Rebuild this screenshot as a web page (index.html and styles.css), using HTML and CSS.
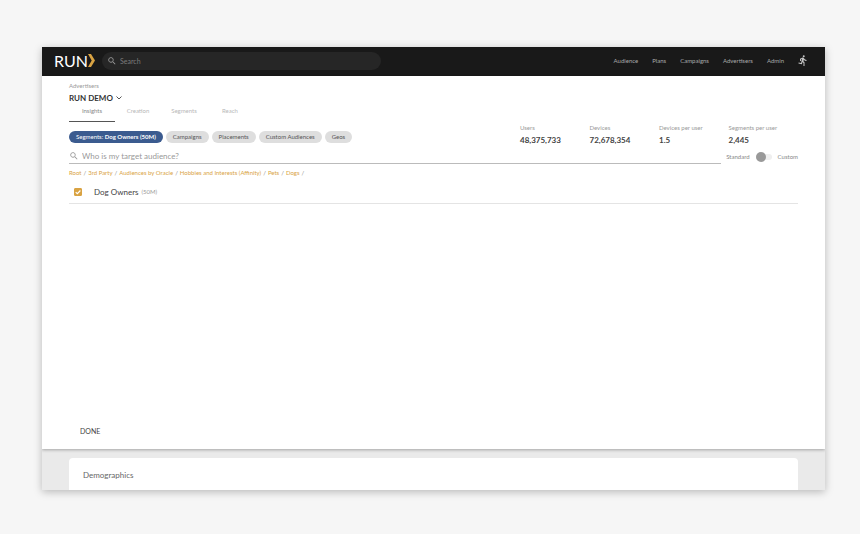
FILE: index.html
```html
<!DOCTYPE html>
<html lang="en">
<head>
    <meta charset="UTF-8">
    <meta name="viewport" content="width=device-width, initial-scale=1.0">
    <title>RUN - Insights</title>
    <link rel="stylesheet" href="styles.css">
</head>
<body>
    <div class="window">
        <header class="topbar">
            <a class="logo" href="#">RUN<svg class="logo-mark" viewBox="0 0 7 13"><path d="M0 0h3l4 6.500-4 6.500H0l3.700-6.500z"/></svg></a>
            <label class="search">
                <svg class="icon" viewBox="0 0 24 24"><path d="M15.500 14h-.79l-.28-.27A6.500 6.500 0 1 0 13.730 14.430l.27.28v.79l5 5L20.490 19zM9.500 14a4.500 4.500 0 1 1 0-9 4.500 4.500 0 0 1 0 9z"/></svg>
                <input type="search" placeholder="Search" aria-label="Search">
            </label>
            <nav class="nav">
                <a href="#">Audience</a>
                <a href="#">Plans</a>
                <a href="#">Campaigns</a>
                <a href="#">Advertisers</a>
                <a href="#">Admin</a>
                <a class="runner" href="#" aria-label="Account"><svg viewBox="3 1 18 22"><path d="M13.490 5.480a2 2 0 1 0 0-4 2 2 0 0 0 0 4zm-3.600 13.900l1-4.400 2.100 2v6h2v-7.500l-2.100-2 .6-3a7.300 7.300 0 0 0 5.500 2.500v-2c-1.900 0-3.500-1-4.300-2.400l-1-1.600c-.4-.6-1-1-1.700-1-.3 0-.5.1-.8.1l-5.200 2.200v4.700h2v-3.400l1.800-.7-1.600 8.100-4.900-1-.4 2z"/></svg></a>
            </nav>
        </header>

        <main class="panel">
            <div class="summary">
                <div class="account">
                    <span class="account-label">Advertisers</span>
                    <button class="account-name" type="button">RUN DEMO
                        <svg viewBox="0 0 6 4"><path d="M.5.5L3 3 5.500.5"/></svg>
                    </button>
                    <nav class="tabs">
                        <a class="tab active" href="#">Insights</a>
                        <a class="tab" href="#">Creation</a>
                        <a class="tab" href="#">Segments</a>
                        <a class="tab" href="#">Reach</a>
                    </nav>
                    <div class="chips">
                        <button class="chip selected" type="button">Segments: <b>Dog Owners (50M)</b></button>
                        <button class="chip" type="button">Campaigns</button>
                        <button class="chip" type="button">Placements</button>
                        <button class="chip" type="button">Custom Audiences</button>
                        <button class="chip" type="button">Geos</button>
                    </div>
                </div>
                <dl class="stats">
                    <div><dt>Users</dt><dd>48,375,733</dd></div>
                    <div><dt>Devices</dt><dd>72,678,354</dd></div>
                    <div><dt>Devices per user</dt><dd>1.5</dd></div>
                    <div><dt>Segments per user</dt><dd>2,445</dd></div>
                </dl>
            </div>

            <div class="query">
                <label class="query-box">
                    <svg class="icon" viewBox="0 0 24 24"><path d="M15.500 14h-.79l-.28-.27A6.500 6.500 0 1 0 13.730 14.430l.27.28v.79l5 5L20.490 19zM9.500 14a4.500 4.500 0 1 1 0-9 4.500 4.500 0 0 1 0 9z"/></svg>
                    <input type="text" placeholder="Who is my target audience?" aria-label="Target audience">
                </label>
                <label class="mode">
                    <span>Standard</span>
                    <input class="switch" type="checkbox">
                    <span>Custom</span>
                </label>
            </div>

            <nav class="crumbs">
                <a href="#">Root</a><i>/</i>
                <a href="#">3rd Party</a><i>/</i>
                <a href="#">Audiences by Oracle</a><i>/</i>
                <a href="#">Hobbies and Interests (Affinity)</a><i>/</i>
                <a href="#">Pets</a><i>/</i>
                <a href="#">Dogs</a><i>/</i>
            </nav>

            <label class="result">
                <span class="tick">
                    <input type="checkbox" checked>
                    <svg viewBox="0 0 7 7"><path d="M1.500 3.600L2.900 5 5.600 2.200"/></svg>
                </span>
                <span>Dog Owners</span>
                <small>(50M)</small>
            </label>

            <button class="done" type="button">DONE</button>
        </main>

        <section class="below">
            <div class="card">
                <h2>Demographics</h2>
            </div>
        </section>
    </div>
</body>
</html>
```

FILE: styles.css
```css
* {
    box-sizing: border-box;
}

body {
    margin: 0;
    height: 100vh;
    padding: 47px 35px 44px 42px;
    background: #f6f6f6;
    color: #444;
    font-family: Lato, "Open Sans", sans-serif;
    font-size: 6px;
    line-height: 8px;
}

a {
    color: inherit;
    text-decoration: none;
}

button,
input {
    margin: 0;
    padding: 0;
    border: 0;
    background: none;
    color: inherit;
    font: inherit;
}

input {
    outline: none;
}

.window {
    display: flex;
    flex-direction: column;
    height: 100%;
    overflow: hidden;
    background: #eaeaea;
    box-shadow: 0 2px 8px rgba(0, 0, 0, 0.25);
}

/* Top bar */
.topbar {
    display: flex;
    flex: none;
    align-items: center;
    height: 29px;
    padding: 0 17px 2px 12px;
    background: #191919;
}

.logo {
    display: flex;
    align-items: center;
    width: 48px;
    color: #fff;
    font-size: 16px;
    line-height: 20px;
}

.logo-mark {
    width: 7px;
    height: 13px;
    fill: #d9a343;
}

.search {
    display: flex;
    align-items: center;
    gap: 3px;
    width: 37%;
    height: 18px;
    padding: 0 5px;
    border-radius: 9px;
    background: #262626;
    color: #8c8c8c;
}

.icon {
    flex: none;
    width: 10px;
    height: 10px;
    fill: #999;
}

.search input {
    flex: 1;
    min-width: 0;
    font-size: 7px;
}

.search input::placeholder {
    color: #7c7c7c;
}

.nav {
    display: flex;
    align-items: center;
    gap: 14px;
    margin-left: auto;
    color: #aaa;
    font-size: 6px;
}

.runner svg {
    display: block;
    width: 10px;
    height: 11px;
    fill: #c4c4c4;
}

/* Main panel */
.panel {
    display: flex;
    flex: none;
    flex-direction: column;
    align-items: stretch;
    height: calc(100% - 70px);
    padding: 6px 27px 13px;
    background: #fff;
    box-shadow: 0 1px 3px rgba(0, 0, 0, 0.3);
}

.summary {
    display: flex;
    justify-content: space-between;
    align-items: flex-end;
}

.account-label {
    display: block;
    color: #999;
}

.account-name {
    display: flex;
    align-items: center;
    gap: 3px;
    margin-top: 3px;
    color: #333;
    font-size: 8px;
    font-weight: bold;
    line-height: 10px;
}

.account-name svg {
    width: 6px;
    height: 4px;
    fill: none;
    stroke: #555;
}

.tabs {
    display: flex;
    margin-top: 4px;
}

.tab {
    width: 46px;
    padding-bottom: 6px;
    border-bottom: 1px solid transparent;
    color: #b8b8b8;
    text-align: center;
}

.tab.active {
    border-color: #555;
    color: #888;
}

.chips {
    display: flex;
    gap: 3px;
    margin-top: 9px;
}

.chip {
    height: 12px;
    padding: 0 7px;
    border-radius: 6px;
    background: #dedede;
    color: #555;
    line-height: 12px;
    white-space: nowrap;
}

.chip.selected {
    background: #3b5b8f;
    color: #fff;
}

.stats {
    display: grid;
    grid-template-columns: repeat(4, 1fr);
    width: 278px;
    margin: 0 0 -2px;
}

.stats dt {
    color: #999;
}

.stats dd {
    margin: 3px 0 0;
    font-size: 8px;
    font-weight: bold;
    line-height: 10px;
}

.query {
    display: flex;
    align-items: flex-end;
    gap: 5px;
    margin-top: 5px;
}

.query-box {
    display: flex;
    flex: 1;
    align-items: center;
    gap: 3px;
    height: 16px;
    border-bottom: 1px solid #bbb;
}

.query-box input {
    flex: 1;
    font-size: 8px;
}

.query-box input::placeholder {
    color: #999;
}

.mode {
    display: flex;
    align-items: center;
    gap: 6px;
    padding-bottom: 3px;
    color: #888;
}

.switch {
    display: flex;
    align-items: center;
    width: 16px;
    height: 6px;
    border-radius: 3px;
    background: #efefef;
    appearance: none;
}

.switch::before {
    content: "";
    width: 10px;
    height: 10px;
    border-radius: 50%;
    background: #999;
}

.switch:checked {
    justify-content: flex-end;
}

.crumbs {
    display: flex;
    gap: 2px;
    margin-top: 5px;
    color: #d9a343;
}

.crumbs i {
    color: #888;
    font-style: normal;
}

.result {
    display: flex;
    align-items: center;
    gap: 3px;
    height: 27px;
    padding: 3px 5px 0;
    border-bottom: 1px solid #e4e4e4;
    color: #444;
    font-size: 8px;
}

.result small {
    color: #999;
    font-size: 6px;
}

.tick {
    display: grid;
    margin-right: 9px;
}

.tick input,
.tick svg {
    grid-area: 1 / 1;
    width: 8px;
    height: 8px;
}

.tick input {
    border: 1px solid #d9a343;
    border-radius: 1px;
    appearance: none;
}

.tick input:checked {
    background: #d9a343;
}

.tick svg {
    fill: none;
    stroke: #fff;
}

.done {
    align-self: flex-start;
    margin-top: auto;
    padding-left: 11px;
    font-size: 7px;
    line-height: 10px;
}

/* Reports under the panel */
.below {
    flex: none;
    padding: 9px 27px 0;
}

.card {
    height: 100px;
    padding: 12px 14px;
    border-radius: 4px;
    background: #fff;
}

.card h2 {
    margin: 0;
    color: #666;
    font-size: 8px;
    font-weight: normal;
    line-height: 10px;
}
```
